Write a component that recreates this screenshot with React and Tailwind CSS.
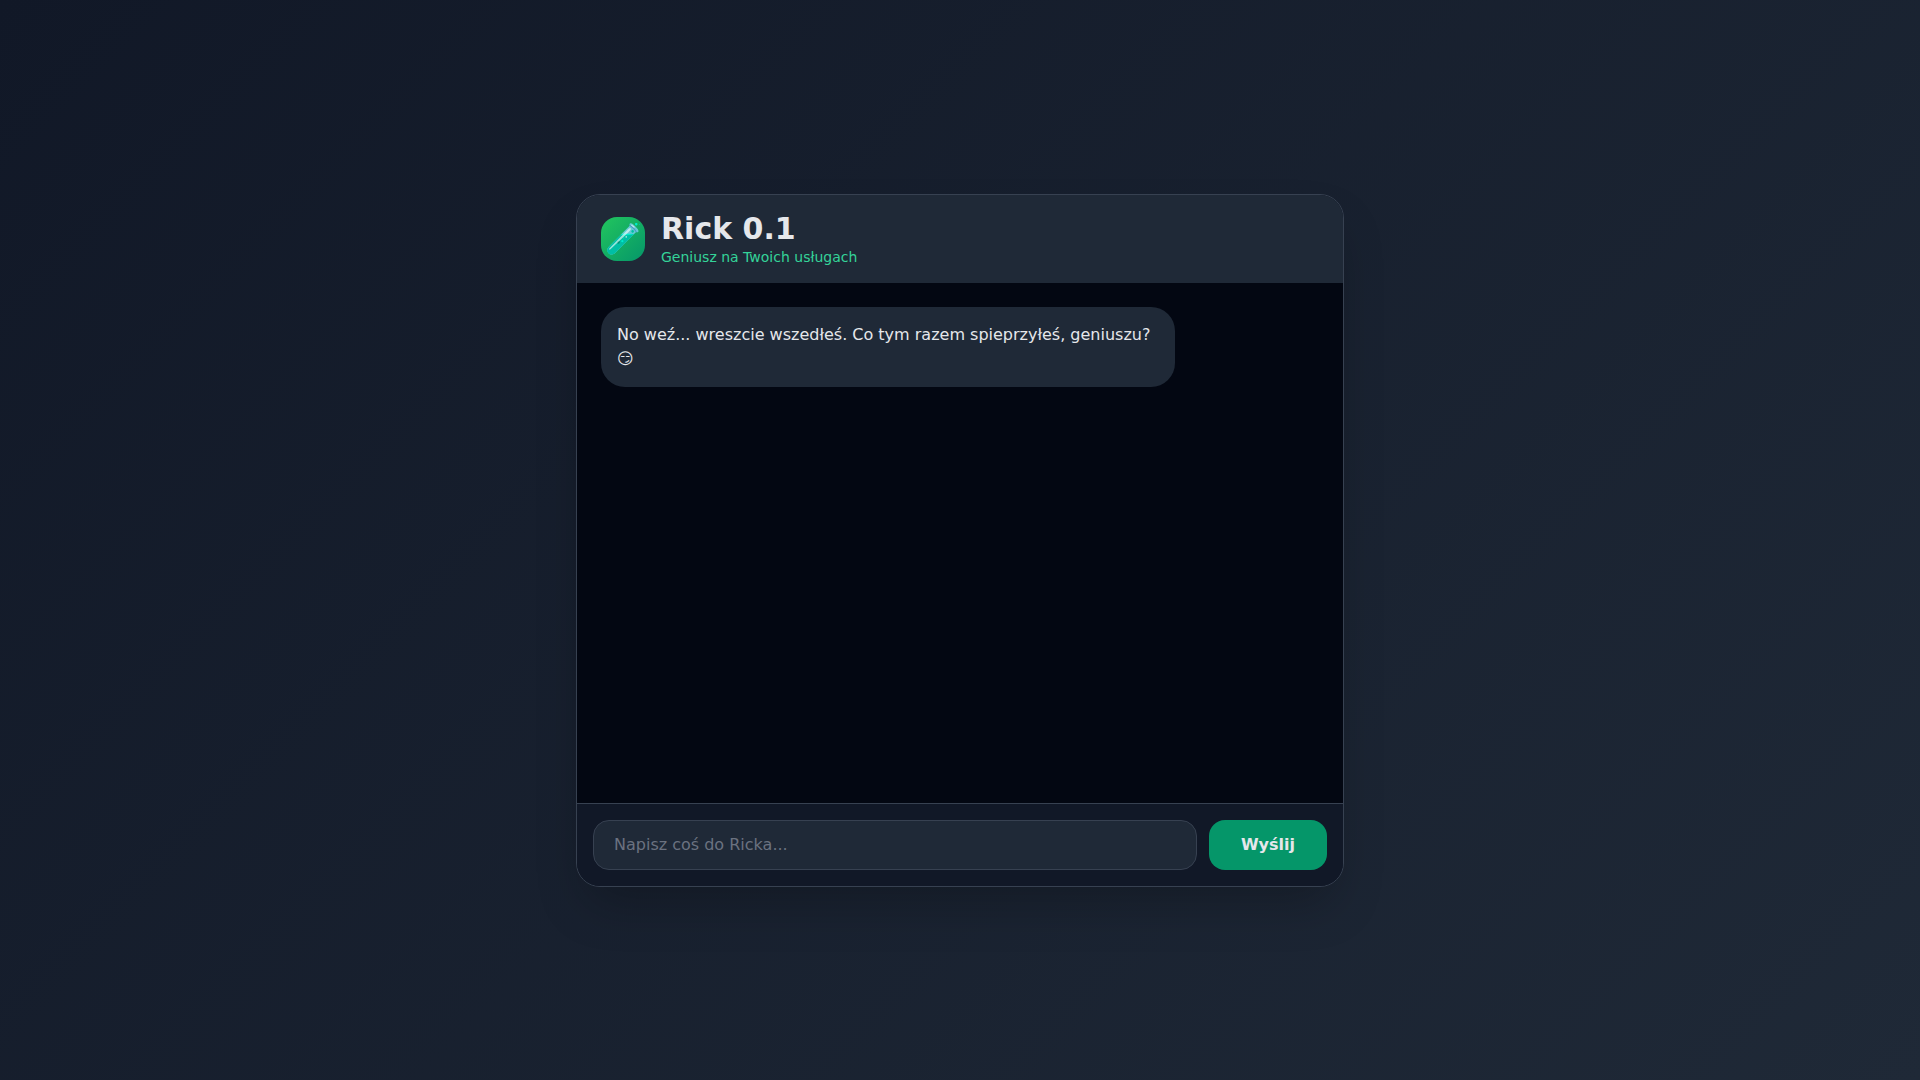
import React, { useState } from "react";

const initialMessages = [
  {
    role: "rick",
    text: "No weź... wreszcie wszedłeś. Co tym razem spieprzyłeś, geniuszu? 😏",
  },
];

const App = () => {
  const [messages, setMessages] = useState(initialMessages);
  const [input, setInput] = useState("");

  const handleSubmit = (e) => {
    e.preventDefault();
    if (!input.trim()) return;
    setMessages([...messages, { role: "user", text: input }]);
    setInput("");
  };

  return (
    <div className="min-h-screen flex items-center justify-center p-4 bg-[linear-gradient(135deg,#111827,#1f2937)] text-[#e5e7eb] font-['DejaVu_Sans',sans-serif]">
      <div className="w-full max-w-3xl bg-[#111827] border border-[#374151] rounded-3xl shadow-2xl overflow-hidden">
        {/* Header */}
        <header className="flex items-center gap-4 bg-[#1f2937] px-6 py-4">
          <div className="w-11 h-11 flex items-center justify-center rounded-2xl bg-[linear-gradient(135deg,#22c55e,#059669)] text-3xl">
            🧪
          </div>
          <div>
            <h1 className="text-3xl font-bold">Rick 0.1</h1>
            <p className="text-sm text-[#34d399]">Geniusz na Twoich usługach</p>
          </div>
        </header>

        {/* Messages */}
        <main className="h-[520px] overflow-y-auto p-6 space-y-6 bg-gray-950">
          {messages.map((msg, i) => (
            <div
              key={i}
              className={`flex ${msg.role === "user" ? "justify-end" : "justify-start"}`}
            >
              <div
                className={`max-w-[80%] rounded-3xl p-4 ${
                  msg.role === "user" ? "bg-[#059669]" : "bg-[#1f2937]"
                }`}
              >
                {msg.text}
              </div>
            </div>
          ))}
        </main>

        {/* Input */}
        <form
          onSubmit={handleSubmit}
          className="flex gap-3 p-4 border-t border-[#374151] bg-[#111827]"
        >
          <input
            type="text"
            aria-label="Wiadomość"
            value={input}
            onChange={(e) => setInput(e.target.value)}
            placeholder="Napisz coś do Ricka..."
            className="flex-1 min-w-0 bg-[#1f2937] border border-[#374151] rounded-2xl px-5 py-3 placeholder:text-[#6b7280] focus:outline-none focus:border-[#10b981]"
          />
          <button
            type="submit"
            className="px-8 rounded-2xl bg-[#059669] hover:bg-[#10b981] font-bold"
          >
            Wyślij
          </button>
        </form>
      </div>
    </div>
  );
};

export default App;
